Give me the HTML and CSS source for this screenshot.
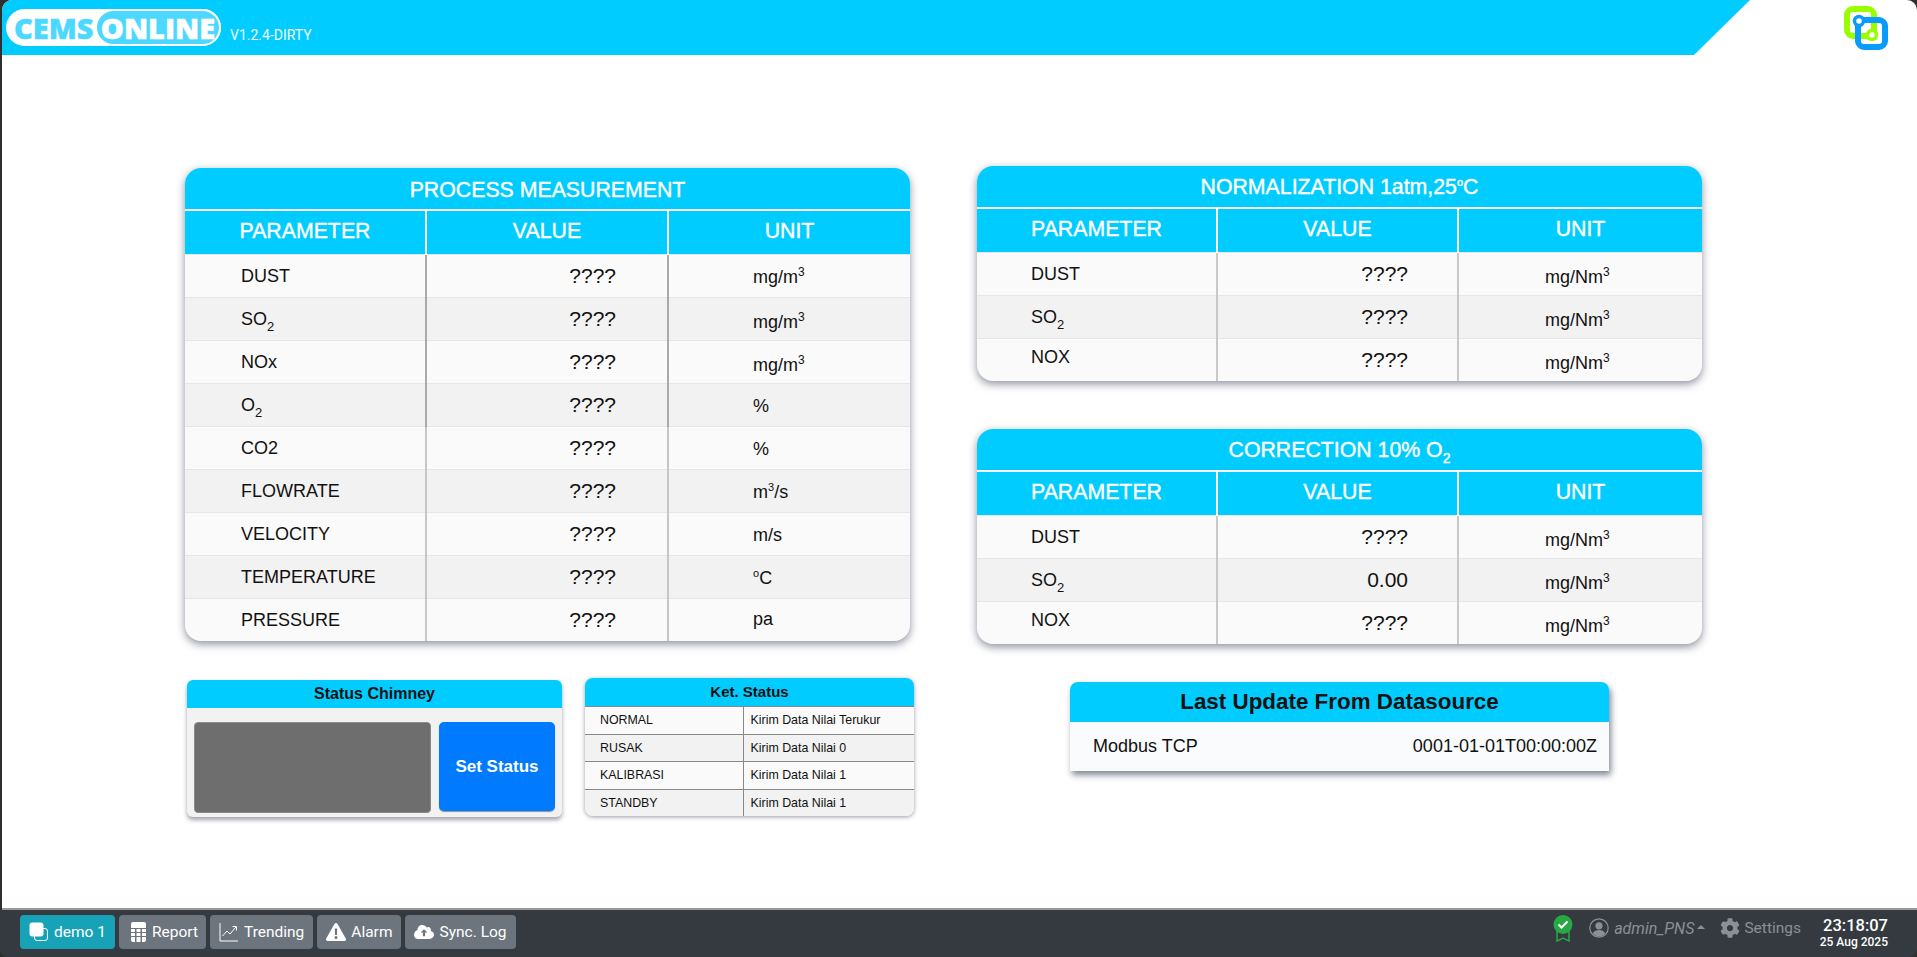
FILE: index.html
```html
<!DOCTYPE html>
<html lang="en">
<head>
    <meta charset="UTF-8">
    <title>CEMS Online</title>
    <link rel="stylesheet" href="styles.css">
</head>
<body>
<div class="app">
    <header class="topbar">
        <div class="topbar_band">
            <div class="logo">
                <span class="logo_cems">CEMS</span>
                <span class="logo_online">ONLINE</span>
            </div>
            <span class="version">V1.2.4-DIRTY</span>
        </div>
        <svg class="brand_icon" viewBox="0 0 45 44" width="45" height="44">
            <rect x="3" y="3" width="27" height="27" rx="6" fill="none" stroke="#99ff00" stroke-width="6"/>
            <path d="M17 29h11" fill="none" stroke="#99ff00" stroke-width="4"/>
            <rect x="14" y="14" width="27" height="27" rx="6" fill="none" stroke="#0a9bff" stroke-width="6"/>
            <circle cx="28" cy="29" r="4.500" fill="#fff" stroke="#99ff00" stroke-width="3.500"/>
            <circle cx="15" cy="15" r="4.500" fill="#fff" stroke="#0a9bff" stroke-width="3.500"/>
        </svg>
    </header>

    <main class="board">
        <div class="col_left">
            <section class="panel">
                <table class="data_table process">
                    <colgroup><col class="col_a"><col class="col_b"><col></colgroup>
                    <thead>
                        <tr class="title_row"><th colspan="3">PROCESS MEASUREMENT</th></tr>
                        <tr class="head_row"><th>PARAMETER</th><th>VALUE</th><th>UNIT</th></tr>
                    </thead>
                    <tbody>
                        <tr><td>DUST</td><td>????</td><td>mg/m<sup>3</sup></td></tr>
                        <tr><td>SO<sub>2</sub></td><td>????</td><td class="unit_low">mg/m<sup>3</sup></td></tr>
                        <tr><td>NOx</td><td>????</td><td class="unit_low">mg/m<sup>3</sup></td></tr>
                        <tr><td>O<sub>2</sub></td><td>????</td><td class="unit_up">%</td></tr>
                        <tr><td>CO2</td><td>????</td><td>%</td></tr>
                        <tr><td>FLOWRATE</td><td>????</td><td>m<sup class="small_sup">3</sup>/s</td></tr>
                        <tr><td>VELOCITY</td><td>????</td><td class="unit_up">m/s</td></tr>
                        <tr><td>TEMPERATURE</td><td>????</td><td class="unit_up"><sup class="small_sup">o</sup>C</td></tr>
                        <tr><td>PRESSURE</td><td>????</td><td class="unit_high">pa</td></tr>
                    </tbody>
                </table>
            </section>

            <div class="status_row">
                <section class="chimney">
                    <h3 class="small_title">Status Chimney</h3>
                    <div class="chimney_body">
                        <div class="chimney_state"></div>
                        <button class="set_status">Set Status</button>
                    </div>
                </section>
                <section class="ket">
                    <h3 class="small_title ket_title">Ket. Status</h3>
                    <table class="ket_table">
                        <tr><td>NORMAL</td><td>Kirim Data Nilai Terukur</td></tr>
                        <tr><td>RUSAK</td><td>Kirim Data Nilai 0</td></tr>
                        <tr><td>KALIBRASI</td><td>Kirim Data Nilai 1</td></tr>
                        <tr><td>STANDBY</td><td>Kirim Data Nilai 1</td></tr>
                    </table>
                </section>
            </div>
        </div>

        <div class="col_right">
            <section class="panel">
                <table class="data_table norm">
                    <colgroup><col class="col_c"><col class="col_d"><col></colgroup>
                    <thead>
                        <tr class="title_row"><th colspan="3">NORMALIZATION 1atm,25<sup class="small_sup">o</sup>C</th></tr>
                        <tr class="head_row"><th>PARAMETER</th><th>VALUE</th><th>UNIT</th></tr>
                    </thead>
                    <tbody>
                        <tr><td>DUST</td><td>????</td><td>mg/Nm<sup>3</sup></td></tr>
                        <tr><td>SO<sub>2</sub></td><td>????</td><td>mg/Nm<sup>3</sup></td></tr>
                        <tr><td class="nox_high">NOX</td><td>????</td><td>mg/Nm<sup>3</sup></td></tr>
                    </tbody>
                </table>
            </section>
            <section class="panel correction">
                <table class="data_table norm">
                    <colgroup><col class="col_c"><col class="col_d"><col></colgroup>
                    <thead>
                        <tr class="title_row"><th colspan="3">CORRECTION 10% O<sub>2</sub></th></tr>
                        <tr class="head_row"><th>PARAMETER</th><th>VALUE</th><th>UNIT</th></tr>
                    </thead>
                    <tbody>
                        <tr><td>DUST</td><td>????</td><td>mg/Nm<sup>3</sup></td></tr>
                        <tr><td>SO<sub>2</sub></td><td>0.00</td><td>mg/Nm<sup>3</sup></td></tr>
                        <tr><td class="nox_high">NOX</td><td>????</td><td>mg/Nm<sup>3</sup></td></tr>
                    </tbody>
                </table>
            </section>
            <section class="last_update">
                <h3>Last Update From Datasource</h3>
                <div class="last_update_row">
                    <span>Modbus TCP</span>
                    <span>0001-01-01T00:00:00Z</span>
                </div>
            </section>
        </div>
    </main>

    <footer class="taskbar">
        <nav class="task_buttons">
            <a class="task_btn active">
                <svg viewBox="0 0 20 20" width="20" height="20">
                    <rect x="5.500" y="6.500" width="13" height="12" rx="2.500" fill="none" stroke="#fff" stroke-width="1"/>
                    <rect x="0.500" y="0.500" width="14" height="14" rx="3" fill="#fff"/>
                </svg>
                demo 1
            </a>
            <a class="task_btn report_btn">
                <svg viewBox="0 0 15 20" width="15" height="20">
                    <path fill="#fff" d="M2 0h11a2 2 0 0 1 2 2v4H0V2a2 2 0 0 1 2-2z"/>
                    <path fill="#fff" d="M0 7h4v3H0zM5.500 7h4v3h-4zM11 7h4v3h-4zM0 11h4v3H0zM5.500 11h4v3h-4zM11 11h4v3h-4zM0 15h4v5H2a2 2 0 0 1-2-2zM5.500 15h4v5h-4zM11 15h4v3a2 2 0 0 1-2 2h-2z"/>
                </svg>
                Report
            </a>
            <a class="task_btn">
                <svg viewBox="0 0 20 20" width="20" height="20" fill="none" stroke="#fff" stroke-width="1">
                    <path d="M1 1v18h18"/>
                    <path d="M3.500 14l4.500-5 3 3 6-7"/>
                    <path d="M13.500 4.500h4v4"/>
                </svg>
                Trending
            </a>
            <a class="task_btn">
                <svg viewBox="0 0 20 18" width="20" height="18">
                    <path fill="#fff" fill-rule="evenodd" d="M10 0c.6 0 1.100.3 1.400.8l8.400 14.700c.6 1.100-.2 2.500-1.400 2.500H1.600c-1.200 0-2-1.400-1.400-2.500L8.600.8C8.900.3 9.400 0 10 0zM8.800 5.500l.3 6.500h1.800l.3-6.500zM10 13a1.500 1.500 0 1 0 0 3 1.500 1.500 0 0 0 0-3z"/>
                </svg>
                Alarm
            </a>
            <a class="task_btn">
                <svg viewBox="0 0 20 14" width="20" height="14">
                    <path fill="#fff" fill-rule="evenodd" d="M16.600 6.100C16.800 5.700 16.900 5.300 16.900 4.800c0-1.500-1.200-2.700-2.700-2.700-.5 0-1 .2-1.500.5C11.800 1 10.200 0 8.300 0 5.700 0 3.600 2.100 3.500 4.700v.4C1.500 5.800 0 7.700 0 9.900 0 12.200 1.800 14 4.100 14h11.500c2.400 0 4.400-2 4.400-4.400 0-1.700-1.400-3.100-3.400-3.500zM10 4.200l3.300 3.300h-2.200v3.700H8.900V7.500H6.700z"/>
                </svg>
                Sync. Log
            </a>
        </nav>
        <div class="task_status">
            <svg class="badge" viewBox="0 0 20 27" width="20" height="27">
                <path d="M4 16v10l6-3 6 3V16" fill="none" stroke="#28a745" stroke-width="1.500"/>
                <circle cx="10" cy="9.500" r="9.500" fill="#28a745"/>
                <path d="M5.500 9.500l3 3 6-6" fill="none" stroke="#fff" stroke-width="2"/>
            </svg>
            <svg class="user_icon" viewBox="0 0 20 20" width="20" height="20">
                <circle cx="10" cy="10" r="9.200" fill="none" stroke="#8a9097" stroke-width="1.200"/>
                <circle cx="10" cy="7.800" r="3.600" fill="#8a9097"/>
                <path d="M3.800 15.500c1.200-2.500 3.400-3.400 6.200-3.400s5 .9 6.200 3.400c-1.600 1.900-3.800 3-6.200 3s-4.600-1.100-6.200-3z" fill="#8a9097"/>
            </svg>
            <span class="user_name">admin_PNS</span>
            <span class="caret"></span>
            <svg class="gear" viewBox="0 0 512 512" width="20" height="20">
                <path fill="#8a9097" d="M487.400 315.700l-42.600-24.600c4.300-23.200 4.300-47 0-70.200l42.600-24.600c4.900-2.800 7.100-8.600 5.500-14-11.100-35.600-30-67.800-54.700-94.600-3.800-4.100-10-5.100-14.800-2.300L380.800 110c-17.900-15.400-38.500-27.300-60.800-35.100V25.800c0-5.600-3.900-10.500-9.400-11.700-36.700-8.200-74.300-7.800-109.200 0-5.500 1.200-9.400 6.100-9.400 11.700V75c-22.200 7.900-42.800 19.800-60.800 35.100L88.700 85.500c-4.900-2.800-11-1.900-14.800 2.300-24.700 26.700-43.600 58.900-54.700 94.600-1.700 5.400.6 11.200 5.500 14L67.300 221c-4.300 23.200-4.300 47 0 70.200l-42.600 24.600c-4.900 2.800-7.100 8.600-5.500 14 11.100 35.600 30 67.800 54.700 94.600 3.800 4.100 10 5.100 14.800 2.300l42.600-24.600c17.900 15.400 38.500 27.300 60.800 35.100v49.200c0 5.600 3.900 10.500 9.400 11.700 36.700 8.200 74.300 7.800 109.200 0 5.500-1.200 9.400-6.100 9.400-11.700v-49.200c22.200-7.900 42.800-19.800 60.800-35.100l42.600 24.600c4.900 2.800 11 1.900 14.800-2.300 24.700-26.700 43.600-58.900 54.700-94.600 1.500-5.500-.7-11.300-5.600-14.100zM256 336c-44.100 0-80-35.900-80-80s35.900-80 80-80 80 35.900 80 80-35.900 80-80 80z"/>
            </svg>
            <span class="settings">Settings</span>
            <div class="clock">
                <div class="clock_time">23:18:07</div>
                <div class="clock_date">25 Aug 2025</div>
            </div>
        </div>
    </footer>
</div>
</body>
</html>
```

FILE: styles.css
```css
html, body {
    margin: 0;
    padding: 0;
    height: 100%;
    background-color: #2f2f2f;
    overflow: hidden;
}
.app {
    width: 1917px;
    height: 957px;
    display: flex;
    flex-direction: column;
    font-family: "Liberation Sans", Arial, sans-serif;
    color: #111;
}

/* top bar */
.topbar {
    height: 55px;
    margin-left: 2px;
    background-color: #fff;
    border-radius: 10px 10px 0 0;
    display: flex;
    justify-content: space-between;
    overflow: hidden;
    flex-shrink: 0;
}
.topbar_band {
    width: 1748px;
    background-color: #00ccff;
    clip-path: polygon(0 0, 100% 0, 1692px 100%, 0 100%);
    display: flex;
    align-items: flex-start;
    padding: 9px 0 0 4px;
    box-sizing: border-box;
}
.logo {
    width: 215px;
    height: 37px;
    background-color: #fff;
    border-radius: 19px;
    display: flex;
    align-items: center;
    font-family: "Open Sans", sans-serif;
    font-weight: 800;
    font-size: 29px;
    line-height: 1;
    box-sizing: border-box;
}
.logo_cems {
    color: #4dd8ff;
    width: 89px;
    padding-left: 8px;
    box-sizing: border-box;
    -webkit-text-stroke: 0.5px #4dd8ff;
}
.logo_online {
    flex: 1;
    height: 37px;
    line-height: 33px;
    box-sizing: border-box;
    border: 2px solid #fff;
    color: #fff;
    background-color: #4dd8ff;
    border-radius: 19px;
    text-align: center;
    -webkit-text-stroke: 0.5px #fff;
}
.version {
    color: #f2fcff;
    font-family: Roboto, sans-serif;
    font-size: 14px;
    margin: 18px 0 0 9px;
}
.brand_icon {
    margin: 6px 28px 0 0;
}

/* main board */
.board {
    flex: 1;
    margin-left: 2px;
    background-color: #fff;
    border-bottom: 2px solid #9a9a9a;
    display: grid;
    grid-template-columns: 725px 725px;
    column-gap: 67px;
    padding: 111px 0 0 183px;
}
.panel {
    background-color: #fafafa;
    border-radius: 16px;
    overflow: hidden;
    box-shadow: 0 3px 8px rgba(50, 55, 80, 0.55);
}
.col_left {
    padding-top: 2px;
}
.data_table {
    width: 100%;
    border-collapse: collapse;
    table-layout: fixed;
}
.col_a {
    width: 241px;
}
.col_b {
    width: 242px;
}
.col_c {
    width: 240px;
}
.col_d {
    width: 241px;
}
.data_table th {
    background-color: #00ccff;
    color: #fff;
    font-weight: normal;
    font-size: 21.300px;
    -webkit-text-stroke: 0.4px #fff;
    padding: 0;
}
.title_row th {
    height: 42px;
    padding-top: 1px;
    box-sizing: border-box;
    border-bottom: 2px solid #fff;
}
.process .title_row th {
    padding-top: 3px;
}
.head_row th {
    height: 44px;
    padding-bottom: 1px;
    box-sizing: border-box;
    border-left: 2px solid #fff;
}
.head_row th:first-child {
    border-left: 0;
}
.data_table td {
    height: 43px;
    padding: 0;
    font-size: 18px;
    color: #111;
    border-left: 2px solid #aaa;
    border-top: 1px solid #e6e6e6;
    box-sizing: border-box;
}
.data_table tr:nth-child(even) td {
    background-color: #f2f2f2;
}
.process tbody tr:nth-child(n+5) td {
    border-left-color: #c6c6c6;
}
.data_table td:first-child {
    border-left: 0;
    padding-left: 56px;
    padding-top: 2px;
}
.data_table td:nth-child(2) {
    text-align: right;
    padding-right: 51px;
    font-size: 21px;
}
.norm td:nth-child(2) {
    padding-right: 49px;
}
.data_table td:nth-child(3) {
    padding-left: 84px;
    padding-top: 4px;
}
.data_table td.unit_low {
    padding-top: 7px;
}
.data_table td.unit_up {
    padding-top: 3px;
}
.data_table td.unit_high {
    padding-top: 0;
}
.data_table td.nox_high {
    padding-top: 0;
    padding-bottom: 4px;
}
.norm td:first-child {
    padding-left: 54px;
}
.norm td {
    border-left-color: #c8c8c8;
}
.data_table td:nth-child(3) sup {
    vertical-align: 7px;
}
.norm td:nth-child(3) {
    padding-left: 86px;
    padding-top: 7px;
}
.data_table sup {
    font-size: 12px;
    line-height: 0;
}
.data_table sub {
    font-size: 13px;
    line-height: 0;
    vertical-align: -6px;
}
.data_table th sub {
    font-size: 14px;
}
.small_sup {
    font-size: 11px !important;
}
.correction {
    margin-top: 48px;
}

/* status widgets */
.status_row {
    display: flex;
    align-items: flex-start;
    margin-top: 37px;
    gap: 23px;
}
.small_title {
    margin: 0;
    background-color: #00ccff;
    color: #111;
    text-align: center;
    font-size: 16px;
    line-height: 28px;
}
.ket_title {
    font-size: 15px;
}
.chimney {
    width: 375px;
    flex-shrink: 0;
    margin: 2px 0 0 2px;
    background-color: #f2f2f2;
    border-radius: 6px;
    overflow: hidden;
    box-shadow: 0 3px 4px rgba(50, 55, 80, 0.45);
}
.chimney_body {
    display: flex;
    gap: 8px;
    height: 109px;
    padding: 14px 6px 0 7px;
    box-sizing: border-box;
}
.chimney_state {
    width: 237px;
    height: 91px;
    background-color: #6e6e6e;
    border: 1px solid #8a8a8a;
    border-radius: 4px;
    box-sizing: border-box;
}
.set_status {
    width: 116px;
    height: 89px;
    border: 0;
    background-color: #007bff;
    color: #fff;
    font-family: "Liberation Sans", Arial, sans-serif;
    font-size: 17px;
    font-weight: bold;
    border-radius: 5px;
    box-shadow: 0 1px 1px rgba(0, 0, 0, 0.4);
}
.ket {
    width: 329px;
    height: 138px;
    flex-shrink: 0;
    background-color: #fafafa;
    border-radius: 8px;
    overflow: hidden;
    box-shadow: 0 1px 4px rgba(50, 55, 80, 0.5);
}
.ket_table {
    width: 100%;
    height: 110px;
    border-collapse: collapse;
    table-layout: fixed;
    font-size: 12.400px;
}
.ket_table td {
    padding: 0 0 0 7px;
    border-top: 1px solid #888;
    border-left: 1px solid #888;
}
.ket_table td:first-child {
    width: 158px;
    box-sizing: border-box;
    border-left: 0;
    padding-left: 15px;
}
.ket_table tr:nth-child(even) td {
    background-color: #f2f2f2;
}

.last_update {
    width: 539px;
    height: 89px;
    margin: 38px 0 0 93px;
    background-color: #fafbfc;
    border-radius: 8px 8px 0 0;
    overflow: hidden;
    box-shadow: 2px 4px 6px rgba(60, 70, 90, 0.65);
}
.last_update h3 {
    margin: 0;
    height: 40px;
    background-color: #00ccff;
    color: #111;
    font-size: 22.400px;
    line-height: 40px;
    text-align: center;
}
.last_update_row {
    display: flex;
    justify-content: space-between;
    align-items: center;
    height: 49px;
    padding: 0 12px 0 23px;
    font-size: 18px;
}

/* bottom task bar */
.taskbar {
    height: 47px;
    padding-bottom: 3px;
    box-sizing: border-box;
    background-color: #343a40;
    border-radius: 0 0 8px 8px;
    display: flex;
    justify-content: space-between;
    align-items: center;
    font-family: Roboto, sans-serif;
    flex-shrink: 0;
}
.task_buttons {
    display: flex;
    gap: 4px;
    padding-left: 20px;
}
.task_btn {
    display: flex;
    align-items: center;
    gap: 5px;
    height: 34px;
    padding: 0 9px;
    background-color: #6c757d;
    color: #fff;
    font-size: 15.500px;
    border-radius: 4px;
}
.task_btn.active {
    background-color: #17a2b8;
}
.report_btn {
    padding: 0 8px 0 12px;
    gap: 6px;
}
.task_status {
    display: flex;
    align-items: center;
    padding: 0 29px 8px 0;
    color: #8a9097;
    font-size: 15.500px;
}
.user_icon {
    margin-left: 16px;
}
.user_name {
    margin-left: 5px;
    font-size: 16px;
    font-style: italic;
}
.caret {
    width: 0;
    height: 0;
    margin: 0 0 3px 3px;
    border-left: 4px solid transparent;
    border-right: 4px solid transparent;
    border-bottom: 4px solid #8a9097;
}
.gear {
    margin-left: 15px;
}
.settings {
    margin-left: 4px;
}
.clock {
    width: 87px;
    margin-top: 8px;
    text-align: right;
    color: #fff;
    font-weight: 500;
}
.clock_time {
    font-size: 16.500px;
    line-height: 19px;
}
.clock_date {
    font-size: 12px;
    line-height: 14px;
}
```
